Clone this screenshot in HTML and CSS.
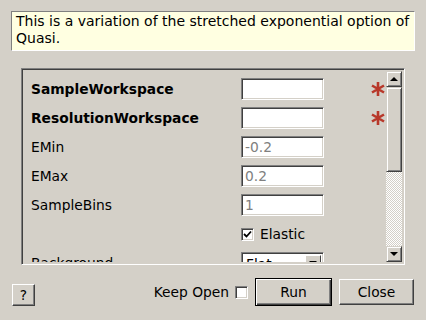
FILE: index.html
```html
<!DOCTYPE html>
<html lang="en">
<head>
  <meta charset="UTF-8">
  <title>Quasi variation</title>
  <link rel="stylesheet" href="styles.css">
</head>
<body>

  <!-- Description -->
  <div class="tooltip">This is a variation of the stretched exponential option of Quasi.</div>

  <!-- Property panel -->
  <div class="panel">
    <div class="rows">
      <label class="name bold">SampleWorkspace</label>
      <div class="field"></div>
      <svg class="star" width="16" height="16" viewBox="0 0 16 16">
        <path d="M8 1v14M2 4.5l12 7M2 11.5l12-7" />
      </svg>

      <label class="name bold">ResolutionWorkspace</label>
      <div class="field"></div>
      <svg class="star" width="16" height="16" viewBox="0 0 16 16">
        <path d="M8 1v14M2 4.5l12 7M2 11.5l12-7" />
      </svg>

      <label class="name">EMin</label>
      <div class="field hint">-0.2</div>
      <span></span>

      <label class="name">EMax</label>
      <div class="field hint">0.2</div>
      <span></span>

      <label class="name">SampleBins</label>
      <div class="field hint">1</div>
      <span></span>

      <span></span>
      <div class="check-row">
        <span class="box">
          <svg width="9" height="9" viewBox="0 0 9 9"><path d="M1 4l2.5 2.5L8 1.5" /></svg>
        </span>
        Elastic
      </div>
      <span></span>

      <label class="name">Background</label>
      <div class="combo">
        <span>Flat</span>
        <span class="drop"><i class="arrow down"></i></span>
      </div>
      <span></span>
    </div>

    <div class="scrollbar">
      <div class="sbtn"><i class="arrow up"></i></div>
      <div class="thumb"></div>
      <div class="track"></div>
      <div class="sbtn"><i class="arrow down"></i></div>
    </div>
  </div>

  <!-- Buttons -->
  <div class="footer">
    <button class="btn help">?</button>
    <div class="spacer"></div>
    <span class="keep">Keep Open</span>
    <span class="box empty"></span>
    <button class="btn run">Run</button>
    <button class="btn close">Close</button>
  </div>

</body>
</html>
```

FILE: styles.css
```css
body {
  margin: 0;
  background: #d4d0c8;
  font-family: "DejaVu Sans", sans-serif;
  font-size: 13.8px;
  color: #000;
}

.tooltip {
  margin: 11px 11px 0;
  height: 40px;
  box-sizing: border-box;
  padding: 1px 4px;
  font-size: 14px;
  line-height: 17px;
  background: #ffffe1;
  border: 1px solid;
  border-color: #808080 #fff #fff #808080;
}

.panel {
  margin: 17px 0 0 21px;
  width: 384px;
  height: 197px;
  box-sizing: border-box;
  border: 1px solid;
  border-color: #808080 #fff #fff #808080;
  box-shadow: inset 1px 1px #404040, inset -1px -1px #d4d0c8;
  padding: 2px;
  display: flex;
  overflow: hidden;
}

.rows {
  flex: 1;
  display: grid;
  grid-template-columns: 210px 83px 1fr;
  grid-auto-rows: 22px;
  row-gap: 7px;
  padding: 7px 0 0 7px;
  align-items: center;
  overflow: hidden;
}

.name {
  line-height: 22px;
}

.bold {
  font-weight: bold;
}

.field {
  height: 22px;
  box-sizing: border-box;
  background: #fff;
  border: 1px solid;
  border-color: #808080 #fff #fff #808080;
  box-shadow: inset 1px 1px #404040, inset -1px -1px #d4d0c8;
  padding: 0 3px;
  line-height: 20px;
}

.hint {
  color: #808080;
}

.star {
  margin-left: 46px;
}

.star path {
  stroke: #b8382a;
  stroke-width: 2.6;
  fill: none;
}

.check-row {
  display: flex;
  align-items: center;
  gap: 6px;
}

.box {
  width: 13px;
  height: 13px;
  box-sizing: border-box;
  background: #fff;
  border: 1px solid;
  border-color: #808080 #fff #fff #808080;
  box-shadow: inset 1px 1px #404040, inset -1px -1px #d4d0c8;
  display: flex;
  align-items: center;
  justify-content: center;
}

.box path {
  stroke: #000;
  stroke-width: 1.8;
  fill: none;
}

.combo {
  height: 22px;
  box-sizing: border-box;
  background: #fff;
  border: 1px solid;
  border-color: #808080 #fff #fff #808080;
  box-shadow: inset 1px 1px #404040, inset -1px -1px #d4d0c8;
  padding: 2px 2px 2px 4px;
  display: flex;
  justify-content: space-between;
  line-height: 18px;
}

.drop {
  width: 16px;
  background: #d4d0c8;
  border: 1px solid;
  border-color: #fff #404040 #404040 #fff;
  box-sizing: border-box;
  display: flex;
  align-items: center;
  justify-content: center;
}

.arrow {
  width: 0;
  height: 0;
  border-left: 4px solid transparent;
  border-right: 4px solid transparent;
}

.arrow.up {
  border-bottom: 4px solid #000;
}

.arrow.down {
  border-top: 4px solid #000;
}

.scrollbar {
  width: 16px;
  display: flex;
  flex-direction: column;
}

.sbtn,
.thumb {
  box-sizing: border-box;
  background: #d4d0c8;
  border: 1px solid;
  border-color: #d4d0c8 #404040 #404040 #d4d0c8;
  box-shadow: inset 1px 1px #fff, inset -1px -1px #808080;
}

.sbtn {
  height: 16px;
  display: flex;
  align-items: center;
  justify-content: center;
}

.thumb {
  height: 85px;
}

.track {
  flex: 1;
  background: repeating-conic-gradient(#fff 0 25%, #d4d0c8 0 50%) 0 0 / 2px 2px;
}

.footer {
  display: flex;
  align-items: center;
  padding: 13px 12px 0 12px;
}

.spacer {
  flex: 1;
}

.btn {
  font-family: inherit;
  font-size: 13.8px;
  color: #000;
  background: #d4d0c8;
  box-sizing: border-box;
  border: 1px solid;
  border-color: #fff #404040 #404040 #fff;
  box-shadow: inset -1px -1px #808080;
  padding: 0;
}

.help {
  width: 23px;
  height: 22px;
  margin-top: 6px;
}

.keep {
  margin-right: 6px;
}

.box.empty {
  margin-right: 7px;
}

.run {
  width: 77px;
  height: 28px;
  border: 1px solid #000;
  box-shadow: inset 1px 1px #fff, inset -1px -1px #404040, inset -2px -2px #808080;
  margin-right: 7px;
}

.close {
  width: 75px;
  height: 26px;
}
```
